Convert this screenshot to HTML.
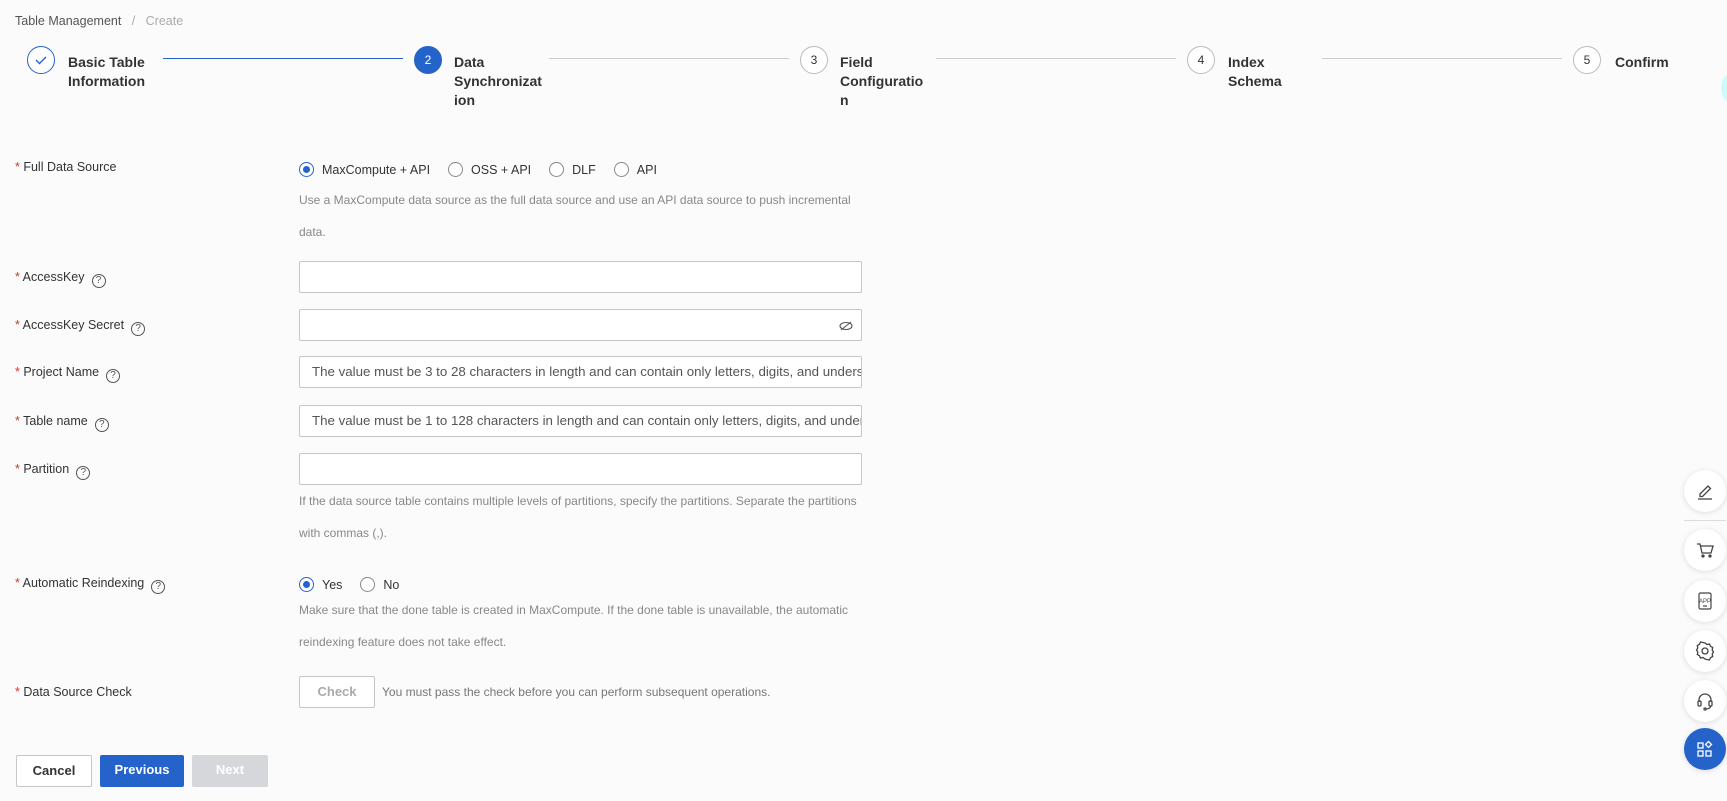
<!DOCTYPE html>
<html><head><meta charset="utf-8"><style>
*{box-sizing:border-box;margin:0;padding:0}
body{width:1727px;height:801px;overflow:hidden;background:#fbfbfb;font-family:"Liberation Sans",sans-serif;color:#333;position:relative}
.a{position:absolute}
.bc{left:15px;top:14px;font-size:12.5px;color:#555}
.bc span{color:#aaa}
.circ{position:absolute;width:28px;height:28px;border-radius:50%;border:1px solid #bbb;font-size:12px;text-align:center;line-height:26px;color:#333;background:#fff}
.slab{position:absolute;font-size:14px;font-weight:bold;color:#333;line-height:19px;width:86px;overflow-wrap:anywhere}
.ln{position:absolute;height:1px;background:#ccc;top:58px}
.lab{position:absolute;left:15px;font-size:12.5px;color:#333}
.lab b{color:#d93026;font-weight:normal}
.q{display:inline-block;width:14px;height:14px;border:1px solid #555;border-radius:50%;font-size:10px;line-height:12px;text-align:center;margin-left:7px;vertical-align:-2px;color:#555}
.inp{position:absolute;left:299px;width:563px;height:32px;border:1px solid #c4c6cc;border-radius:2px;background:#fff;font-size:13.3px;color:#555;padding-left:12px;line-height:30px;white-space:nowrap;overflow:hidden}
.help{position:absolute;left:299px;font-size:12px;color:#888;line-height:32px;width:570px}
.radio{display:inline-flex;align-items:center;font-size:12.5px;color:#333;margin-right:18px}
.radio i{width:15px;height:15px;border-radius:50%;border:1px solid #888;margin-right:8px;background:#fff;position:relative}
.radio i.on{border-color:#2463c9}
.radio i.on:after{content:"";position:absolute;left:3px;top:3px;width:7px;height:7px;border-radius:50%;background:#2463c9}
.btn{position:absolute;top:755px;height:32px;font-size:13px;font-weight:bold;text-align:center;line-height:30px;border-radius:2px}
.fb{position:absolute;left:1684px;width:42px;height:42px;border-radius:50%;background:#fff;box-shadow:0 1px 6px rgba(0,0,0,.12);display:flex;align-items:center;justify-content:center}
</style></head><body>
<div class="a bc">Table Management &nbsp;&nbsp;<span>/</span>&nbsp;&nbsp; <span>Create</span></div>

<div class="circ" style="left:27px;top:46px;border-color:#2463c9"><svg width="14" height="14" viewBox="0 0 14 14" style="margin-top:6px"><path d="M2 7l3.5 3.5L12 4" fill="none" stroke="#2463c9" stroke-width="1.4"/></svg></div>
<div class="slab" style="left:68px;top:53px;width:90px">Basic Table Information</div>
<div class="ln" style="left:163px;width:240px;background:#2463c9"></div>
<div class="circ" style="left:414px;top:46px;background:#2463c9;border-color:#2463c9;color:#fff">2</div>
<div class="slab" style="left:454px;top:53px;width:88px">Data Synchronization</div>
<div class="ln" style="left:549px;width:240px"></div>
<div class="circ" style="left:800px;top:46px">3</div>
<div class="slab" style="left:840px;top:53px;width:86px">Field Configuration</div>
<div class="ln" style="left:936px;width:240px"></div>
<div class="circ" style="left:1187px;top:46px">4</div>
<div class="slab" style="left:1228px;top:53px;width:84px">Index Schema</div>
<div class="ln" style="left:1322px;width:240px"></div>
<div class="circ" style="left:1573px;top:46px">5</div>
<div class="slab" style="left:1615px;top:53px;width:100px">Confirm</div>
<div class="a" style="left:1721px;top:70px;width:36px;height:36px;border-radius:50%;background:#ccfbfb"></div>

<div class="lab" style="top:160px"><b>*</b> Full Data Source</div>
<div class="a" style="left:299px;top:162px">
<span class="radio"><i class="on"></i>MaxCompute + API</span><span class="radio"><i></i>OSS + API</span><span class="radio"><i></i>DLF</span><span class="radio"><i></i>API</span></div>
<div class="help" style="top:184px">Use a MaxCompute data source as the full data source and use an API data source to push incremental data.</div>

<div class="lab" style="top:270px"><b>*</b> AccessKey<span class="q">?</span></div>
<div class="inp" style="top:261px"></div>
<div class="lab" style="top:318px"><b>*</b> AccessKey Secret<span class="q">?</span></div>
<div class="inp" style="top:309px"><svg width="14" height="10" viewBox="0 0 14 10" style="position:absolute;right:8px;top:11px"><ellipse cx="7" cy="5" rx="6" ry="3.5" fill="none" stroke="#555" stroke-width="1.1"/><path d="M2 9L12 1" stroke="#555" stroke-width="1.1"/></svg></div>
<div class="lab" style="top:365px"><b>*</b> Project Name<span class="q">?</span></div>
<div class="inp" style="top:356px">The value must be 3 to 28 characters in length and can contain only letters, digits, and underscores</div>
<div class="lab" style="top:414px"><b>*</b> Table name<span class="q">?</span></div>
<div class="inp" style="top:405px">The value must be 1 to 128 characters in length and can contain only letters, digits, and underscores</div>
<div class="lab" style="top:462px"><b>*</b> Partition<span class="q">?</span></div>
<div class="inp" style="top:453px"></div>
<div class="help" style="top:485px">If the data source table contains multiple levels of partitions, specify the partitions. Separate the partitions with commas (,).</div>

<div class="lab" style="top:576px"><b>*</b> Automatic Reindexing<span class="q">?</span></div>
<div class="a" style="left:299px;top:577px"><span class="radio"><i class="on"></i>Yes</span><span class="radio"><i></i>No</span></div>
<div class="help" style="top:594px">Make sure that the done table is created in MaxCompute. If the done table is unavailable, the automatic reindexing feature does not take effect.</div>

<div class="lab" style="top:685px"><b>*</b> Data Source Check</div>
<div class="a" style="left:299px;top:676px;width:76px;height:32px;border:1px solid #c4c6cc;border-radius:2px;background:#fff;font-size:13px;font-weight:bold;color:#aaa;text-align:center;line-height:30px">Check</div>
<div class="a" style="left:382px;top:685px;font-size:12px;color:#777">You must pass the check before you can perform subsequent operations.</div>

<div class="btn" style="left:16px;width:76px;border:1px solid #c4c6cc;background:#fff;color:#333">Cancel</div>
<div class="btn" style="left:100px;width:84px;background:#2463c9;color:#fff">Previous</div>
<div class="btn" style="left:192px;width:76px;background:#d5d7db;color:#fff">Next</div>

<div class="fb" style="top:470px"><svg width="20" height="20" viewBox="0 0 20 20" fill="none" stroke="#444" stroke-width="1.3"><path d="M5 13l8-8 2.5 2.5-8 8H5z"/><path d="M3 18h14"/></svg></div>
<div class="a" style="left:1684px;top:520px;width:42px;height:1px;background:#ddd"></div>
<div class="fb" style="top:529px"><svg width="20" height="20" viewBox="0 0 20 20" fill="none" stroke="#444" stroke-width="1.3"><path d="M2 4h3l2 9h9l2-7H6"/><circle cx="8" cy="16" r="1" fill="#444"/><circle cx="15" cy="16" r="1" fill="#444"/></svg></div>
<div class="fb" style="top:580px"><svg width="20" height="20" viewBox="0 0 20 20" fill="none" stroke="#444" stroke-width="1.2"><rect x="4" y="2" width="12" height="16" rx="1.5"/><text x="10" y="12" font-size="6" text-anchor="middle" fill="#444" stroke="none" font-family="Liberation Sans">APP</text><path d="M8 15h4"/></svg></div>
<div class="fb" style="top:630px"><svg width="20" height="20" viewBox="0 0 20 20" fill="none" stroke="#444" stroke-width="1.3"><path d="M10 2l2 1.5 2.5-.5 1 2.3 2.2 1.2-.5 2.5 1.3 2-1.3 2 .5 2.5-2.2 1.2-1 2.3-2.5-.5L10 18l-2-1.5-2.5.5-1-2.3-2.2-1.2.5-2.5L1.5 9l1.3-2-.5-2.5L4.5 3.3l1-2.3L8 1.5z"/><circle cx="10" cy="10" r="3"/></svg></div>
<div class="fb" style="top:680px"><svg width="20" height="20" viewBox="0 0 20 20" fill="none" stroke="#444" stroke-width="1.3"><path d="M4 11V9a6 6 0 0112 0v2"/><rect x="3" y="10" width="3" height="5" rx="1"/><rect x="14" y="10" width="3" height="5" rx="1"/><path d="M15.5 15c0 2-2 3-4.5 3"/><circle cx="10" cy="18" r="1"/></svg></div>
<div class="fb" style="top:728px;background:#2463c9"><svg width="20" height="20" viewBox="0 0 20 20" fill="none" stroke="#fff" stroke-width="1.3"><rect x="3" y="4" width="5" height="5"/><rect x="3" y="12" width="5" height="5"/><rect x="11" y="12" width="5" height="5"/><path d="M13.5 2.5l3 3-3 3-3-3z"/></svg></div>
</body></html>
